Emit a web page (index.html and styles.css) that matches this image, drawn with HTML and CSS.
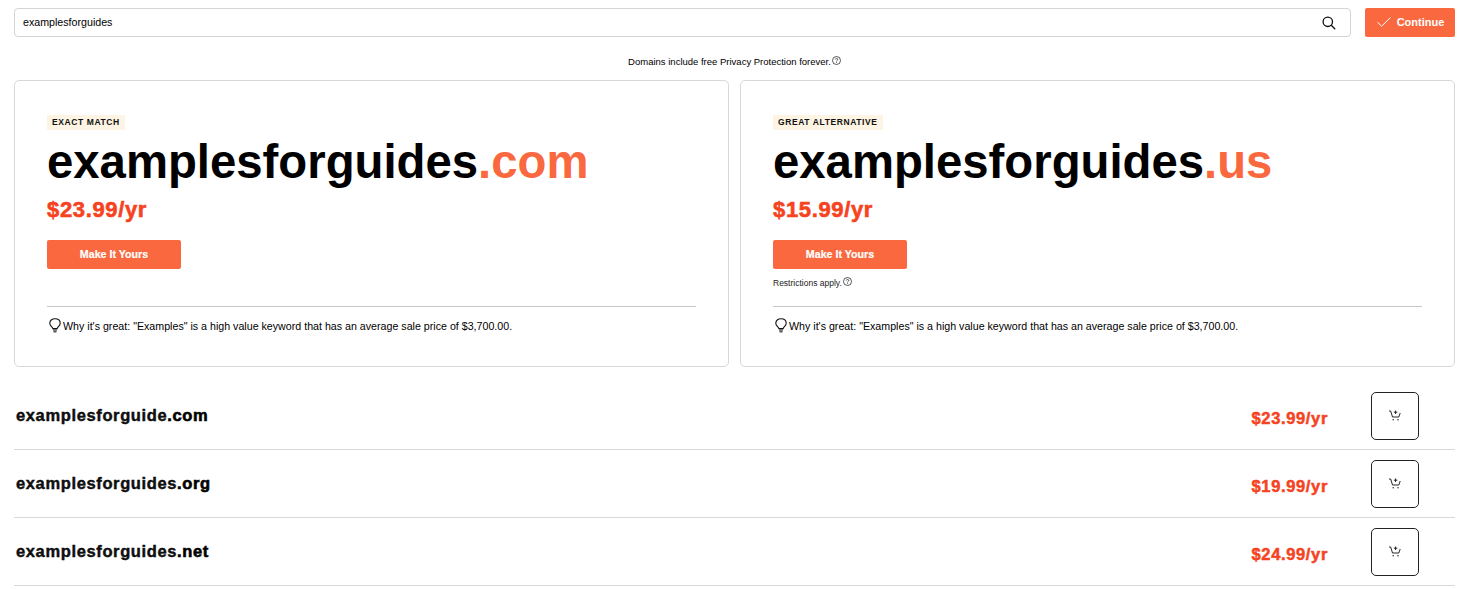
FILE: index.html
```html
<!DOCTYPE html>
<html lang="en">
<head>
<meta charset="utf-8">
<title>Domain search</title>
<link rel="stylesheet" href="styles.css">
</head>
<body>
<div class="page">
  <div class="search-row">
    <div class="search-box">
      <span class="search-text">examplesforguides</span>
      <svg class="search-icon" width="14" height="14" viewBox="0 0 14 14" fill="none" stroke="#111" stroke-width="1.3"><circle cx="5.8" cy="5.8" r="4.7"/><path d="M9.3 9.3L13.2 13.2"/></svg>
    </div>
    <button class="continue"><svg width="14" height="10" viewBox="0 0 14 10" fill="none" stroke="#fff" stroke-width="1"><path d="M0.5 5.2L4.6 9.2L13.5 0.5"/></svg><span>Continue</span></button>
  </div>
  <p class="privacy">Domains include free Privacy Protection forever.<svg class="help" width="9" height="9" viewBox="0 0 9 9" fill="none" stroke="#111" stroke-width=".7"><circle cx="4.5" cy="4.5" r="4"/><path d="M3.3 3.5C3.4 2 5.8 2.1 5.7 3.5C5.6 4.4 4.5 4.3 4.5 5.5M4.5 6.2V7"/></svg></p>
  <div class="cards">
    <section class="card">
      <span class="tag">EXACT MATCH</span>
      <h1 class="domain">examplesforguides<span class="tld">.com</span></h1>
      <div class="price">$23.99/yr</div>
      <button class="make">Make It Yours</button>
      <div class="note"></div>
      <div class="why"><svg width="12" height="15" viewBox="0 0 12 15" fill="none" stroke="#111" stroke-width="1.1"><path d="M3.9 10.6C3.6 8.8 .8 8 .8 5.2C.8 2.6 3 .8 6 .8C9 .8 11.200 2.600 11.200 5.200C11.200 8 8.400 8.800 8.100 10.600Z"/><path d="M4 12H8M4.500 13.800H7.500" stroke="#555" stroke-width="1.4"/></svg><span>Why it's great: "Examples" is a high value keyword that has an average sale price of $3,700.00.</span></div>
    </section>
    <section class="card">
      <span class="tag">GREAT ALTERNATIVE</span>
      <h1 class="domain">examplesforguides<span class="tld">.us</span></h1>
      <div class="price">$15.99/yr</div>
      <button class="make">Make It Yours</button>
      <div class="note">Restrictions apply.<svg class="help" width="9" height="9" viewBox="0 0 9 9" fill="none" stroke="#111" stroke-width=".7"><circle cx="4.500" cy="4.500" r="4"/><path d="M3.3 3.500C3.400 2 5.800 2.100 5.700 3.500C5.600 4.400 4.500 4.300 4.500 5.500M4.500 6.200V7"/></svg></div>
      <div class="why"><svg width="12" height="15" viewBox="0 0 12 15" fill="none" stroke="#111" stroke-width="1.1"><path d="M3.9 10.6C3.6 8.8 .8 8 .8 5.2C.8 2.6 3 .8 6 .8C9 .8 11.200 2.600 11.200 5.200C11.200 8 8.400 8.800 8.100 10.600Z"/><path d="M4 12H8M4.500 13.800H7.500" stroke="#555" stroke-width="1.4"/></svg><span>Why it's great: "Examples" is a high value keyword that has an average sale price of $3,700.00.</span></div>
    </section>
  </div>
  <div class="list">
    <div class="row">
      <div class="row-name">examplesforguide<span class="row-tld">.com</span></div>
      <div class="row-price">$23.99/yr</div>
      <button class="cart"><svg width="12" height="11" viewBox="0 0 12 11" fill="none" stroke="#111" stroke-width=".9"><path d="M0 1H1.700L3.500 7H9.800L11.200 3M6.600 .5V4M4.900 2.200H8.300"/><circle cx="4.200" cy="9.700" r=".7" fill="#111" stroke="none"/><circle cx="9" cy="9.700" r=".7" fill="#111" stroke="none"/></svg></button>
    </div>
    <div class="row">
      <div class="row-name">examplesforguides<span class="row-tld">.org</span></div>
      <div class="row-price">$19.99/yr</div>
      <button class="cart"><svg width="12" height="11" viewBox="0 0 12 11" fill="none" stroke="#111" stroke-width=".9"><path d="M0 1H1.700L3.500 7H9.800L11.200 3M6.600 .5V4M4.900 2.200H8.300"/><circle cx="4.200" cy="9.700" r=".7" fill="#111" stroke="none"/><circle cx="9" cy="9.700" r=".7" fill="#111" stroke="none"/></svg></button>
    </div>
    <div class="row">
      <div class="row-name">examplesforguides<span class="row-tld">.net</span></div>
      <div class="row-price">$24.99/yr</div>
      <button class="cart"><svg width="12" height="11" viewBox="0 0 12 11" fill="none" stroke="#111" stroke-width=".9"><path d="M0 1H1.700L3.500 7H9.800L11.200 3M6.600 .5V4M4.900 2.200H8.300"/><circle cx="4.200" cy="9.700" r=".7" fill="#111" stroke="none"/><circle cx="9" cy="9.700" r=".7" fill="#111" stroke="none"/></svg></button>
    </div>
  </div>
</div>
</body>
</html>
```
FILE: styles.css
```css
* { box-sizing: border-box; }
html, body { margin: 0; padding: 0; background: #fff; overflow: hidden; }
body { font-family: "Liberation Sans", Arial, sans-serif; color: #000; height: 589px; }
button { font-family: inherit; border: 0; padding: 0; cursor: pointer; }
.page { padding: 8px 10px 0 14px; }
.search-row { display: flex; gap: 14px; height: 29px; }
.search-box { flex: 1; display: flex; align-items: center; justify-content: space-between; border: 1px solid #d4d4d4; border-radius: 4px; padding: 0 14px 0 8px; }
.search-text { font-size: 10.67px; margin-top: -1px; }
.continue { width: 90px; background: #f9683e; color: #fff; font-size: 11px; font-weight: 700; border-radius: 2px; display: flex; align-items: center; justify-content: center; gap: 6px; padding: 0 0 2px 1px; }
.privacy { margin: 19px 0 0; height: 24px; font-size: 9.5px; line-height: 11px; text-align: center; }
.help { margin-left: 1px; vertical-align: 0; }
.cards { display: flex; gap: 11px; }
.card { flex: 1; height: 287px; border: 1px solid #d8d8d8; border-radius: 5px; padding: 34px 32px 0; display: flex; flex-direction: column; align-items: flex-start; }
.tag { background: #fdf4e3; font-size: 8.5px; font-weight: 700; letter-spacing: .6px; line-height: 15px; height: 15px; padding: 0 5px; color: #111; }
.domain { margin: 4px 0 0; font-size: 47.3px; line-height: 55px; font-weight: 700; white-space: nowrap; }
.tld { color: #f9683e; }
.price { margin-top: 8px; font-size: 22px; line-height: 26px; font-weight: 700; letter-spacing: .65px; color: #f6431f; -webkit-text-stroke: .6px #f6431f; }
.make { margin-top: 17px; width: 134px; height: 29px; background: #f9683e; color: #fff; font-size: 10.67px; font-weight: 700; -webkit-text-stroke: .2px #fff; border-radius: 2px; padding-bottom: 2px; }
.note { margin-top: 8px; height: 30px; width: 100%; font-size: 8.5px; line-height: 12px; color: #222; border-bottom: 1px solid #c8c8c8; }
.why { margin-top: 11px; display: flex; align-items: center; gap: 2px; font-size: 10.67px; padding-left: 2px; }
.list { margin-top: 15px; }
.row { height: 68px; display: flex; align-items: center; padding-left: 2px; border-bottom: 1px solid #d8d8d8; }
.row-name { flex: 1; font-size: 16.5px; font-weight: 700; letter-spacing: .63px; -webkit-text-stroke: .4px #000; color: #111; }
.row-tld { color: #000; -webkit-text-stroke: .6px #000; }
.row-price { font-size: 16.5px; font-weight: 700; letter-spacing: .65px; color: #f6431f; -webkit-text-stroke: .5px #f6431f; margin: 6px 43px 0 0; }
.cart { width: 48px; height: 48px; margin-right: 36px; background: #fff; border: 1px solid #222; border-radius: 5px; display: flex; align-items: center; justify-content: center; }
```
